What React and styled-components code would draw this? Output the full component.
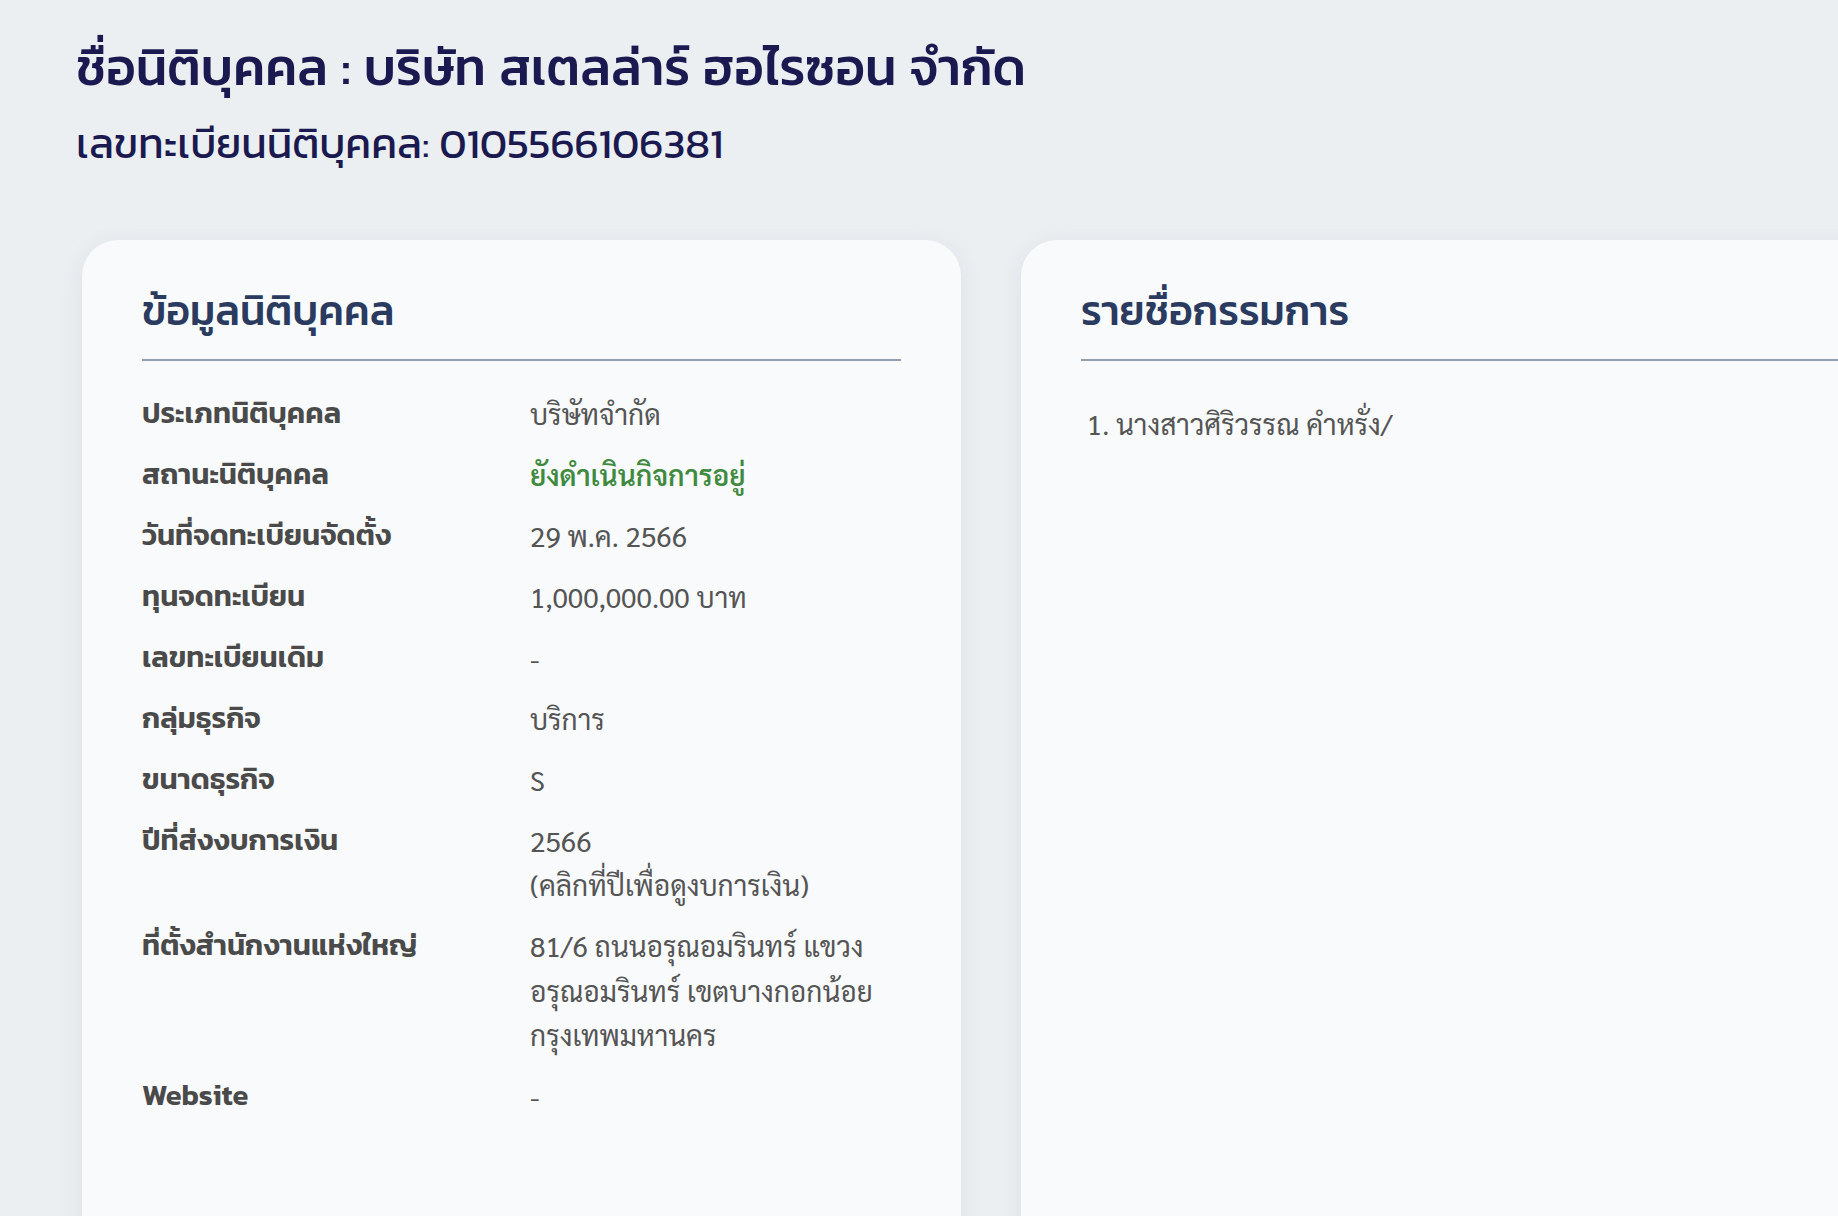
import styled, { createGlobalStyle } from 'styled-components'

const GlobalStyle = createGlobalStyle`
  html, body {
    margin: 0;
    padding: 0;
    background: #eceff2;
    overflow: hidden;
  }
  * { box-sizing: border-box; }
`

const info = [
  { label: 'ประเภทนิติบุคคล', value: ['บริษัทจำกัด'] },
  { label: 'สถานะนิติบุคคล', value: ['ยังดำเนินกิจการอยู่'], status: true },
  { label: 'วันที่จดทะเบียนจัดตั้ง', value: ['29 พ.ค. 2566'] },
  { label: 'ทุนจดทะเบียน', value: ['1,000,000.00 บาท'] },
  { label: 'เลขทะเบียนเดิม', value: ['-'] },
  { label: 'กลุ่มธุรกิจ', value: ['บริการ'] },
  { label: 'ขนาดธุรกิจ', value: ['S'] },
  { label: 'ปีที่ส่งงบการเงิน', value: ['2566', '(คลิกที่ปีเพื่อดูงบการเงิน)'] },
  { label: 'ที่ตั้งสำนักงานแห่งใหญ่', value: ['81/6 ถนนอรุณอมรินทร์ แขวง', 'อรุณอมรินทร์ เขตบางกอกน้อย', 'กรุงเทพมหานคร'] },
  { label: 'Website', value: ['-'] },
]

const directors = ['นางสาวศิริวรรณ คำหรั่ง/']

const App = () => {
  return (
    <>
      <GlobalStyle />
      <Page>
        <Title>ชื่อนิติบุคคล : บริษัท สเตลล่าร์ ฮอไรซอน จำกัด</Title>
        <RegNo>เลขทะเบียนนิติบุคคล: 0105566106381</RegNo>
        <Cards>
          <Card>
            <CardTitle>ข้อมูลนิติบุคคล</CardTitle>
            <InfoGrid>
              {info.map(row => (
                <InfoRow key={row.label}>
                  <Label>{row.label}</Label>
                  <Value $status={row.status}>
                    {row.value.map(line => <div key={line}>{line}</div>)}
                  </Value>
                </InfoRow>
              ))}
            </InfoGrid>
          </Card>
          <Card>
            <CardTitle>รายชื่อกรรมการ</CardTitle>
            <DirectorList>
              {directors.map(d => <li key={d}>{d}</li>)}
            </DirectorList>
          </Card>
        </Cards>
      </Page>
    </>
  )
}

export default App

const Page = styled.div`
  padding: 30px 0 0 76px;
  width: 1990px;
`
const Title = styled.h1`
  margin: 0;
  font-family: Kanit, "Noto Sans Thai", sans-serif;
  font-weight: 500;
  font-size: 51px;
  line-height: 75px;
  word-spacing: 2px;
  color: #1a1a50;
`
const RegNo = styled.div`
  margin-top: 10px;
  font-family: Kanit, "Noto Sans Thai", sans-serif;
  font-weight: 400;
  font-size: 42px;
  line-height: 57px;
  color: #1a1a50;
`
const Cards = styled.div`
  display: flex;
  gap: 60px;
  margin: 68px 0 0 6px;
`
const Card = styled.section`
  width: 879px;
  min-height: 1100px;
  padding: 42px 60px;
  background: #f8fafc;
  border-radius: 36px;
  box-shadow: 0 4px 24px rgba(30, 41, 59, 0.07);
`
const CardTitle = styled.h2`
  margin: 0 0 30px;
  padding-bottom: 20px;
  border-bottom: 2px solid #949fb3;
  font-family: Kanit, "Noto Sans Thai", sans-serif;
  font-weight: 500;
  font-size: 41px;
  line-height: 57px;
  color: #2b3a5f;
`
const InfoGrid = styled.div`
  display: flex;
  flex-direction: column;
  gap: 16.4px;
`
const InfoRow = styled.div`
  display: grid;
  grid-template-columns: 388px 1fr;
`
const Label = styled.div`
  font-family: Kanit, "Noto Sans Thai", sans-serif;
  font-weight: 600;
  font-size: 29px;
  line-height: 44.6px;
  color: #4a4a4a;
`
const Value = styled.div`
  font-family: Sarabun, "Noto Sans Thai Looped", sans-serif;
  font-weight: ${p => (p.$status ? 600 : 400)};
  font-size: 28px;
  line-height: 44.4px;
  color: ${p => (p.$status ? '#3f8a3f' : '#555')};
`
const DirectorList = styled.ol`
  margin: 0;
  padding: 10px 0 0 35px;
  font-family: Sarabun, "Noto Sans Thai Looped", sans-serif;
  font-size: 28px;
  line-height: 44.6px;
  color: #555;
`
